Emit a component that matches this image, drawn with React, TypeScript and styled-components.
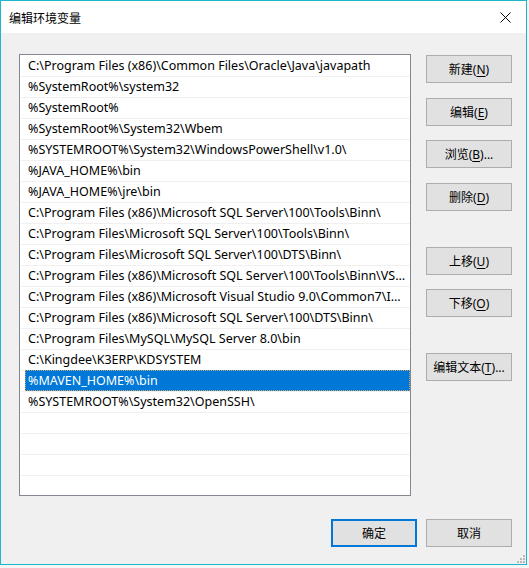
import React from 'react'
import styled, { createGlobalStyle } from 'styled-components'

const GlobalStyle = createGlobalStyle`
    html, body {
        margin : 0;
        padding : 0;
        background : #f4f4f4;
    }
    * {
        box-sizing : border-box;
    }
`

const paths = [
    'C:\\Program Files (x86)\\Common Files\\Oracle\\Java\\javapath',
    '%SystemRoot%\\system32',
    '%SystemRoot%',
    '%SystemRoot%\\System32\\Wbem',
    '%SYSTEMROOT%\\System32\\WindowsPowerShell\\v1.0\\',
    '%JAVA_HOME%\\bin',
    '%JAVA_HOME%\\jre\\bin',
    'C:\\Program Files (x86)\\Microsoft SQL Server\\100\\Tools\\Binn\\',
    'C:\\Program Files\\Microsoft SQL Server\\100\\Tools\\Binn\\',
    'C:\\Program Files\\Microsoft SQL Server\\100\\DTS\\Binn\\',
    'C:\\Program Files (x86)\\Microsoft SQL Server\\100\\Tools\\Binn\\VSShell\\Common7\\IDE\\',
    'C:\\Program Files (x86)\\Microsoft Visual Studio 9.0\\Common7\\IDE\\PrivateAssemblies\\',
    'C:\\Program Files (x86)\\Microsoft SQL Server\\100\\DTS\\Binn\\',
    'C:\\Program Files\\MySQL\\MySQL Server 8.0\\bin',
    'C:\\Kingdee\\K3ERP\\KDSYSTEM',
    '%MAVEN_HOME%\\bin',
    '%SYSTEMROOT%\\System32\\OpenSSH\\',
]

const SELECTED = 15
const TOTAL_ROWS = 21

const sideButtons = [
    { label: '新建', key: 'N', tail: '', gap: 1 },
    { label: '编辑', key: 'E', tail: '', gap: 15 },
    { label: '浏览', key: 'B', tail: '...', gap: 14 },
    { label: '删除', key: 'D', tail: '', gap: 15 },
    { label: '上移', key: 'U', tail: '', gap: 36 },
    { label: '下移', key: 'O', tail: '', gap: 14 },
    { label: '编辑文本', key: 'T', tail: '...', gap: 36 },
]

const EnvEditor: React.FC = () => {
    const rows = Array.from({ length: TOTAL_ROWS }, (_, i) => paths[i] ?? '')

    return (
        <>
            <GlobalStyle />
            <Window>
                <TitleBar>
                    <Title>编辑环境变量</Title>
                    <CloseButton>
                        <svg width="11" height="11" viewBox="0 0 11 11">
                            <path d="M0.5 0.5 L10.5 10.5 M10.5 0.5 L0.5 10.5" stroke="#000" strokeWidth="1" />
                        </svg>
                    </CloseButton>
                </TitleBar>
                <Body>
                    <Main>
                        <PathList>
                            {rows.map((p, i) => (
                                <Row key={i}>
                                    <Cell $selected={i === SELECTED}>{p}</Cell>
                                </Row>
                            ))}
                        </PathList>
                        <ButtonColumn>
                            {sideButtons.map(b => (
                                <Button key={b.key} $gap={b.gap}>
                                    <span>{b.label}(<u>{b.key}</u>){b.tail}</span>
                                </Button>
                            ))}
                        </ButtonColumn>
                    </Main>
                    <Footer>
                        <Button $primary>确定</Button>
                        <Button>取消</Button>
                    </Footer>
                    <Grip>
                        <svg width="9" height="9" viewBox="0 0 9 9">
                            <rect x="7" y="1" width="2" height="2" fill="#b9b9b9" />
                            <rect x="4" y="4" width="2" height="2" fill="#b9b9b9" />
                            <rect x="7" y="4" width="2" height="2" fill="#b9b9b9" />
                            <rect x="1" y="7" width="2" height="2" fill="#b9b9b9" />
                            <rect x="4" y="7" width="2" height="2" fill="#b9b9b9" />
                            <rect x="7" y="7" width="2" height="2" fill="#b9b9b9" />
                        </svg>
                    </Grip>
                </Body>
            </Window>
        </>
    )
}

const Window = styled.div`
    width : 527px;
    height : 565px;
    border : 1px solid #1cb8c9;
    display : flex;
    flex-direction : column;
    background : #f0f0f0;
    font-family : "Noto Sans", "Noto Sans CJK SC", sans-serif;
    font-size : 12px;
    color : #000;
`

const TitleBar = styled.div`
    height : 32px;
    background : #fff;
    display : flex;
    align-items : center;
    justify-content : space-between;
    padding-left : 8px;
    padding-right : 15px;
`

const Title = styled.div`
    font-family : "Noto Sans CJK SC", sans-serif;
    font-size : 12px;
    line-height : 1;
    padding-top : 1px;
`

const CloseButton = styled.div`
    display : flex;
    align-items : center;
    margin-top : 1px;
`

const Body = styled.div`
    flex : 1;
    position : relative;
    display : flex;
    flex-direction : column;
    padding : 21px 14px 0 18px;
`

const Main = styled.div`
    display : flex;
    gap : 15px;
`

const PathList = styled.div`
    width : 392px;
    height : 442px;
    border : 1px solid #828790;
    background : #fff;
    padding : 1px 0 0 1px;
    overflow : hidden;
`

const Row = styled.div`
    height : 21px;
    border-bottom : 1px solid #f0f0f0;
    padding-left : 4px;
    display : flex;
`

const Cell = styled.div<{ $selected?: boolean }>`
    flex : 1;
    min-width : 0;
    padding-left : 2px;
    padding-right : 3px;
    font-size : 12.5px;
    line-height : 20px;
    white-space : nowrap;
    overflow : hidden;
    text-overflow : ellipsis;
    background : ${p => p.$selected ? '#0078d7' : 'transparent'};
    color : ${p => p.$selected ? '#fff' : '#000'};
    border : 1px dotted ${p => p.$selected ? '#c9a66b' : 'transparent'};
    margin-top : -1px;
    height : 21px;
`

const ButtonColumn = styled.div`
    display : flex;
    flex-direction : column;
`

const Button = styled.div<{ $gap?: number, $primary?: boolean }>`
    width : 86px;
    height : 28px;
    margin-top : ${p => p.$gap ?? 0}px;
    background : #e1e1e1;
    border : ${p => p.$primary ? '2px solid #0078d7' : '1px solid #adadad'};
    display : flex;
    align-items : center;
    justify-content : center;
    font-family : "Noto Sans", "Noto Sans CJK SC", sans-serif;
    font-size : 12px;
    white-space : nowrap;
    u {
        text-underline-offset : 2px;
    }
`

const Footer = styled.div`
    display : flex;
    justify-content : flex-end;
    gap : 9px;
    margin-top : 23px;
`

const Grip = styled.div`
    position : absolute;
    right : 1px;
    bottom : 1px;
    display : flex;
`

export default EnvEditor
